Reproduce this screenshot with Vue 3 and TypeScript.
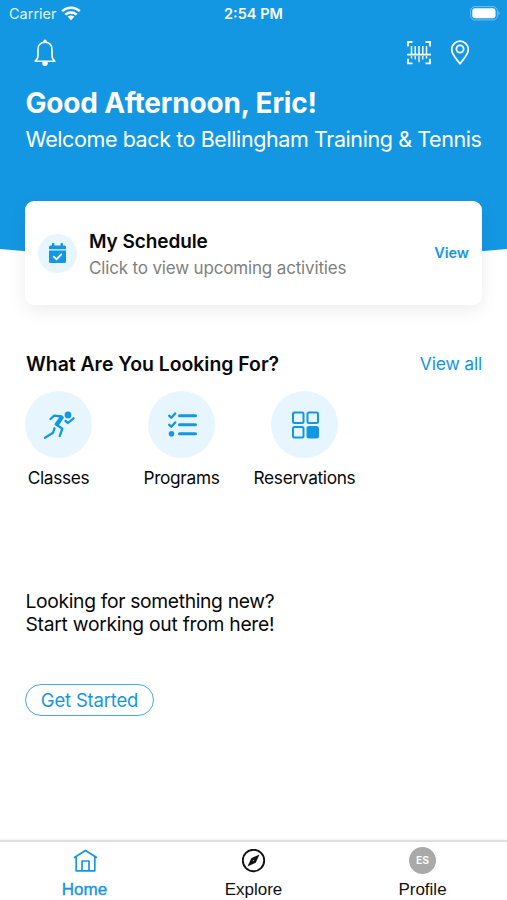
<script setup lang="ts">
interface Category {
  name: string
  icon: 'run' | 'list' | 'grid'
}

const categories: Category[] = [
  { name: 'Classes', icon: 'run' },
  { name: 'Programs', icon: 'list' },
  { name: 'Reservations', icon: 'grid' },
]
</script>

<template>
  <div class="screen">
    <svg class="backdrop" width="507" height="264" viewBox="0 0 507 264" aria-hidden="true">
      <path d="M0 0H507V249Q253.500 273 0 249Z" fill="#1497e2" />
    </svg>

    <header class="header">
      <div class="status">
        <div class="carrier">
          <span>Carrier</span>
          <svg width="20" height="15" viewBox="0 0 20 15">
            <g fill="none" stroke="#fff" stroke-width="2.5">
              <path d="M1.200 5.200C6.200 0.500 13.800 0.500 18.800 5.200" />
              <path d="M4.300 8.600C7.600 5.700 12.400 5.700 15.700 8.600" />
            </g>
            <path d="M6.700 10.800Q10 8.200 13.300 10.800L10 14.200Z" fill="#fff" />
          </svg>
        </div>
        <strong class="clock">2:54 PM</strong>
        <svg class="battery" width="31" height="15" viewBox="0 0 31 15">
          <rect x="1.600" y="0.600" width="26.800" height="13.300" rx="4.200" fill="none" stroke="#75c0ee" />
          <rect x="3.300" y="2.300" width="23.200" height="9.900" rx="2.600" fill="#fff" />
          <path d="M29.500 5Q31.500 7.200 29.500 9.400Z" fill="#8bcaf0" />
        </svg>
      </div>

      <div class="actions">
        <svg class="bell" width="22" height="28" viewBox="0 0 22 28" fill="none" stroke="#fff" stroke-width="1.600">
          <path d="M1.200 22.200H20.800C18.700 20.600 18 19 18 16.500V10.500C18 6 15.200 3.200 11 3.200S4 6 4 10.500V16.500C4 19 3.300 20.600 1.200 22.200Z" stroke-linejoin="round" />
          <circle cx="11" cy="2.200" r="1.700" fill="#fff" stroke="none" />
          <path d="M8.300 22.500H13.700V24.300A2.700 2.700 0 0 1 8.300 24.300Z" fill="#fff" stroke="none" />
        </svg>
        <div class="actions-right">
          <svg width="26" height="26" viewBox="0 0 26 26" fill="none" stroke="#fff" stroke-width="1.600">
            <path d="M2 6.500V2H6.500M19.500 2H24V6.500M24 18.800V23.300H19.500M6.500 23.300H2V18.800" stroke-width="1.800" />
            <path d="M1 14.600H25" stroke-width="1.800" />
            <path d="M5.500 6V14.600M9.250 6V14.600M13 6V14.600M16.750 6V14.600M20.500 6V14.600" stroke-width="1.500" />
            <path d="M5.500 16V18.500M9.250 16V19.500M13 16V22.300M16.750 16V19.500M20.500 16V18.500" stroke-width="1.300" />
          </svg>
          <svg width="20" height="26" viewBox="0 0 20 26" fill="none" stroke="#fff" stroke-width="1.800">
            <path d="M10 23.700C7.500 20.300 1.700 14.700 1.700 9.500A8.300 8.300 0 0 1 18.300 9.500C18.300 14.700 12.500 20.300 10 23.700Z" stroke-linejoin="round" />
            <circle cx="10" cy="9" r="3.600" />
          </svg>
        </div>
      </div>

      <h1>Good Afternoon, Eric!</h1>
      <p class="welcome">Welcome back to Bellingham Training &amp; Tennis</p>
    </header>

    <section class="schedule">
      <div class="schedule-icon">
        <svg width="17" height="20" viewBox="0 0 17 20">
          <path d="M0 6.200V4A1.500 1.500 0 0 1 1.500 2.500H3V1A1 1 0 0 1 5.400 1V2.500H11.600V1A1 1 0 0 1 14 1V2.500H15.500A1.500 1.500 0 0 1 17 4V6.200Z" fill="#1497e2" />
          <path d="M0 7.600H17V18.400A1.500 1.500 0 0 1 15.500 19.900H1.500A1.500 1.500 0 0 1 0 18.400Z" fill="#1497e2" />
          <path d="M4.800 13.700L7.500 16.300L12.300 11.300" fill="none" stroke="#fff" stroke-width="1.800" stroke-linecap="round" stroke-linejoin="round" />
        </svg>
      </div>
      <div class="schedule-text">
        <h2>My Schedule</h2>
        <p>Click to view upcoming activities</p>
      </div>
      <a class="view">View</a>
    </section>

    <section class="looking">
      <div class="looking-head">
        <h2>What Are You Looking For?</h2>
        <a>View all</a>
      </div>
      <ul class="categories">
        <li v-for="category in categories" :key="category.icon" :class="category.icon">
          <div class="bubble">
            <svg v-if="category.icon === 'run'" width="32" height="30" viewBox="0 0 32 30" fill="none" stroke="#1497e2" stroke-width="2.300" stroke-linecap="round" stroke-linejoin="round">
              <circle cx="25" cy="5" r="3.400" fill="#1497e2" stroke="none" />
              <path d="M7.500 9L11.200 5.700L18.400 6.500L12.700 14.300L19.300 18.600L16.800 26" />
              <path d="M17.500 6.500L19.500 7.500L14.500 15" stroke-width="2.600" />
              <path d="M22.500 11L25 13L30.500 8.300" />
              <path d="M11.500 18.300L10 22.800L2 27.800" />
            </svg>
            <svg v-else-if="category.icon === 'list'" width="30" height="27" viewBox="0 0 30 27" fill="none" stroke="#1497e2" stroke-width="2.600" stroke-linecap="round" stroke-linejoin="round">
              <path d="M12.500 4.700H28.500M12.500 13.700H28.500M12.500 22.700H28.500" stroke-width="3" />
              <path d="M2.200 4.800L4.300 6.700L8.200 2.500M2.200 13.800L4.300 15.700L8.200 11.500" stroke-width="2.400" />
              <circle cx="4.500" cy="22.700" r="2.800" fill="#1497e2" stroke="none" />
            </svg>
            <svg v-else width="28" height="28" viewBox="0 0 28 28" fill="none" stroke="#1497e2" stroke-width="2">
              <rect x="2" y="1.500" width="10.500" height="10.500" rx="1.500" />
              <rect x="16.500" y="1.500" width="10.500" height="10.500" rx="1.500" />
              <rect x="2" y="16" width="10.500" height="10.500" rx="1.500" />
              <rect x="16.500" y="16" width="10.500" height="10.500" rx="1.500" fill="#1497e2" />
            </svg>
          </div>
          <span>{{ category.name }}</span>
        </li>
      </ul>
    </section>

    <section class="prompt">
      <p class="line-one">Looking for something new?</p>
      <p class="line-two">Start working out from here!</p>
      <button type="button"><span>Get Started</span></button>
    </section>

    <nav class="tabs">
      <a class="tab active">
        <span class="tab-icon">
          <svg width="26" height="24" viewBox="0 0 26 24" fill="none" stroke="#1497e2" stroke-width="1.700" stroke-linejoin="round">
            <path d="M2 8.800L13.500 1.500L25 8.800M4.200 7.500V21.800H22.800V7.500M10 21.800V12H17V21.800" />
          </svg>
        </span>
        <span class="tab-label">Home</span>
      </a>
      <a class="tab">
        <span class="tab-icon">
          <svg width="24" height="24" viewBox="0 0 24 24">
            <circle cx="11.500" cy="11.500" r="10.700" fill="none" stroke="#111" stroke-width="1.900" />
            <path d="M17.500 5.500L13.700 13.700L5.500 17.500L9.300 9.300Z" fill="#111" />
            <circle cx="11.500" cy="11.500" r="0.700" fill="#999" />
          </svg>
        </span>
        <span class="tab-label">Explore</span>
      </a>
      <a class="tab">
        <span class="tab-icon"><span class="avatar">ES</span></span>
        <span class="tab-label">Profile</span>
      </a>
    </nav>
  </div>
</template>

<style>
body {
  margin: 0;
  background: #fff;
}
</style>

<style scoped>
.screen {
  position: relative;
  display: flex;
  flex-direction: column;
  width: 507px;
  height: 900px;
  overflow: hidden;
  background: #fff;
  color: #080808;
  font-family: Inter, "Liberation Sans", sans-serif;
}
h1, h2, p, ul {
  margin: 0;
  padding: 0;
}
svg {
  display: block;
  flex: none;
}
span, a, h1, h2, p, strong {
  white-space: nowrap;
}
.backdrop {
  position: absolute;
  top: 0;
  left: 0;
}
.header {
  position: relative;
  height: 201px;
  color: #fff;
}
.status {
  display: grid;
  grid-template-columns: 1fr auto 1fr;
  align-items: center;
  height: 27px;
  padding: 0 7px 0 9px;
  font-size: 14.500px;
}
.carrier {
  display: flex;
  align-items: center;
  gap: 4px;
  color: #e3f4ff;
}
.clock {
  margin-right: 2px;
  font-size: 14.500px;
  font-weight: 600;
}
.battery {
  justify-self: end;
}
.actions {
  display: flex;
  justify-content: space-between;
  align-items: center;
  height: 52px;
  padding: 0 37px 0 34px;
}
.actions-right {
  display: flex;
  gap: 18px;
}
h1 {
  padding-left: 25.500px;
  font-size: 28px;
  line-height: 36px;
  font-weight: 700;
  letter-spacing: -0.180px;
  margin-top: 6px;
}
.welcome {
  padding-left: 25.500px;
  font-size: 21.500px;
  line-height: 30px;
  margin-top: 3px;
  letter-spacing: -0.410px;
}
.schedule {
  position: relative;
  display: flex;
  align-items: center;
  box-sizing: border-box;
  height: 104px;
  margin: 0 25px;
  padding: 0 13px;
  border-radius: 9px;
  background: #fff;
  box-shadow: 0 5px 18px rgba(0, 0, 0, 0.075);
}
.schedule-icon {
  display: grid;
  place-items: center;
  width: 39px;
  height: 39px;
  border-radius: 50%;
  background: #e7f5fd;
}
.schedule-text {
  flex: 1;
  padding: 3px 0 0 12px;
}
.schedule h2 {
  font-size: 19px;
  line-height: 27px;
  font-weight: 600;
  letter-spacing: -0.080px;
}
.schedule p {
  font-size: 17px;
  line-height: 26px;
  letter-spacing: -0.160px;
  color: #808080;
}
.view {
  margin-bottom: 2px;
  font-size: 14.500px;
  font-weight: 600;
  color: #1497e2;
}
.looking {
  padding: 46px 25px 0 26px;
}
.looking-head {
  display: flex;
  justify-content: space-between;
  align-items: center;
  height: 26px;
}
.looking-head h2 {
  font-size: 19.400px;
  font-weight: 600;
}
.looking-head a {
  margin-bottom: 2px;
  font-size: 17.500px;
  letter-spacing: -0.200px;
  color: #1497e2;
}
.categories {
  display: flex;
  list-style: none;
  margin: 14px 0 0 -29px;
}
.categories li {
  display: flex;
  flex-direction: column;
  align-items: center;
  width: 123px;
}
.bubble {
  display: grid;
  place-items: center;
  width: 67px;
  height: 67px;
  border-radius: 50%;
  background: #e7f6fe;
}
.categories span {
  margin-top: 8px;
  font-size: 17.300px;
  line-height: 24px;
  letter-spacing: -0.330px;
}
.prompt {
  padding: 100px 0 0 25.500px;
  font-size: 19.300px;
  line-height: 23px;
  letter-spacing: -0.340px;
}
.line-two {
  letter-spacing: -0.270px;
}
.prompt button {
  display: block;
  width: 129px;
  height: 32px;
  margin: 48px 0 0 -0.500px;
  padding: 0;
  border: 1.500px solid #45aae7;
  border-radius: 16px;
  background: #fff;
  color: #1497e2;
  font: inherit;
  font-size: 18.500px;
  letter-spacing: -0.200px;
  line-height: 28px;
}
.tabs {
  display: grid;
  grid-template-columns: repeat(3, 1fr);
  box-sizing: border-box;
  height: 60px;
  margin-top: auto;
  border-top: 2px solid #dedede;
  box-shadow: 0 -1px 2px rgba(0, 0, 0, 0.06);
  background: #fff;
}
.tab {
  display: flex;
  flex-direction: column;
  align-items: center;
  color: #111;
  font-family: "Liberation Sans", sans-serif;
  font-size: 17px;
}
.tab-icon {
  display: grid;
  place-items: center;
  height: 27px;
  margin-top: 5px;
}
.tab-label {
  margin-top: 5px;
  line-height: 22px;
}
.active {
  color: #1497e2;
}
.active .tab-label {
  -webkit-text-stroke: 0.400px #1497e2;
}
.avatar {
  display: grid;
  place-items: center;
  width: 27px;
  height: 27px;
  border-radius: 50%;
  background: #a9a9a9;
  color: #fff;
  font-family: Inter, sans-serif;
  font-size: 10.500px;
  font-weight: 600;
}
</style>
